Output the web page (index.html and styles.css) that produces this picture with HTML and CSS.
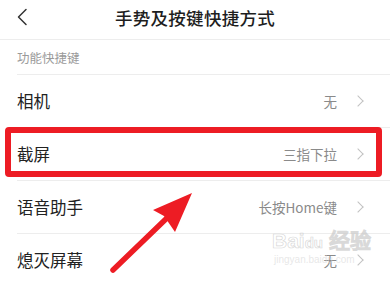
FILE: index.html
```html
<!DOCTYPE html>
<html lang="zh-CN">
<head>
<meta charset="utf-8">
<link rel="stylesheet" href="styles.css">
</head>
<body>
<div class="page">
  <header class="topbar">
    <div class="back">
      <svg width="12" height="18" viewBox="0 0 12 18"><path d="M10 1.5 L2.5 9 L10 16.5" fill="none" stroke="#333" stroke-width="1.5" stroke-linecap="round" stroke-linejoin="round"/></svg>
    </div>
    <div class="title">手势及按键快捷方式</div>
    <div></div>
  </header>
  <div class="section">功能快捷键</div>
  <div class="row"><span class="label">相机</span><span class="value">无</span><span class="chev"></span></div>
  <div class="row highlighted"><span class="label">截屏</span><span class="value">三指下拉</span><span class="chev"></span></div>
  <div class="row"><span class="label">语音助手</span><span class="value">长按Home键</span><span class="chev"></span></div>
  <div class="row"><span class="label">熄灭屏幕</span><span class="value">无</span><span class="chev"></span></div>

  <div class="watermark">
    <div class="wm-top">Bai<span class="paw">du</span> 经验</div>
    <div class="wm-bottom">jingyan.baidu.com</div>
  </div>

  <svg class="arrow" width="390" height="285" viewBox="0 0 390 285">
    <line x1="113" y1="270" x2="168" y2="217" stroke="#ed1c24" stroke-width="5.5" stroke-linecap="round"/>
    <polygon points="192,193 153,210 164,216 175,232" fill="#ed1c24"/>
  </svg>
</div>
</body>
</html>
```
FILE: styles.css
```css
* { box-sizing: border-box; }
html, body { margin: 0; padding: 0; background: #fff; }
body {
  font-family: "Noto Sans CJK SC", "Noto Sans", sans-serif;
  color: #222;
}
.page {
  position: relative;
  width: 390px;
  height: 285px;
  overflow: hidden;
}
.topbar {
  height: 40px;
  border-bottom: 1px solid #ededed;
  display: grid;
  grid-template-columns: 1fr auto 1fr;
  align-items: center;
  padding-bottom: 5px;
}
.back {
  padding-left: 16px;
  display: flex;
  align-items: center;
}
.title {
  font-size: 17.5px;
  font-weight: 500;
  color: #1e1e1e;
  letter-spacing: 0.3px;
}
.section {
  height: 35px;
  margin-left: 17px;
  border-bottom: 1px solid #ededed;
  font-size: 12.5px;
  color: #9a9a9a;
  display: flex;
  align-items: center;
  padding-top: 1px;
}
.row {
  position: relative;
  height: 53px;
  margin-left: 17px;
  padding-right: 27px;
  border-bottom: 1px solid #ededed;
  display: flex;
  align-items: center;
}
.label {
  flex: 1;
  font-size: 16.5px;
  color: #222;
}
.value {
  font-size: 13.5px;
  color: #8a8a8a;
}
.chev {
  width: 8px;
  height: 8px;
  border-top: 1.2px solid #c2c2c2;
  border-right: 1.2px solid #c2c2c2;
  transform: rotate(45deg);
  margin-left: 17px;
  margin-right: 1px;
}
.highlighted::after {
  content: "";
  position: absolute;
  left: -12px;
  right: 8px;
  top: -1px;
  bottom: 3px;
  border: 6px solid #ed1c24;
  border-radius: 4px;
}
.arrow {
  position: absolute;
  left: 0;
  top: 0;
}
.watermark {
  position: absolute;
  left: 272px;
  top: 230px;
  font-family: "Liberation Sans", sans-serif;
  line-height: 1;
  pointer-events: none;
}
.wm-top {
  font-size: 21px;
  font-weight: bold;
  color: transparent;
  -webkit-text-stroke: 0.7px rgba(200,200,200,0.7);
}
.paw {
  font-size: 15px;
}
.wm-bottom {
  font-size: 10px;
  margin-top: 4px;
  margin-left: 2px;
  color: rgba(215, 215, 215, 0.6);
}
```
